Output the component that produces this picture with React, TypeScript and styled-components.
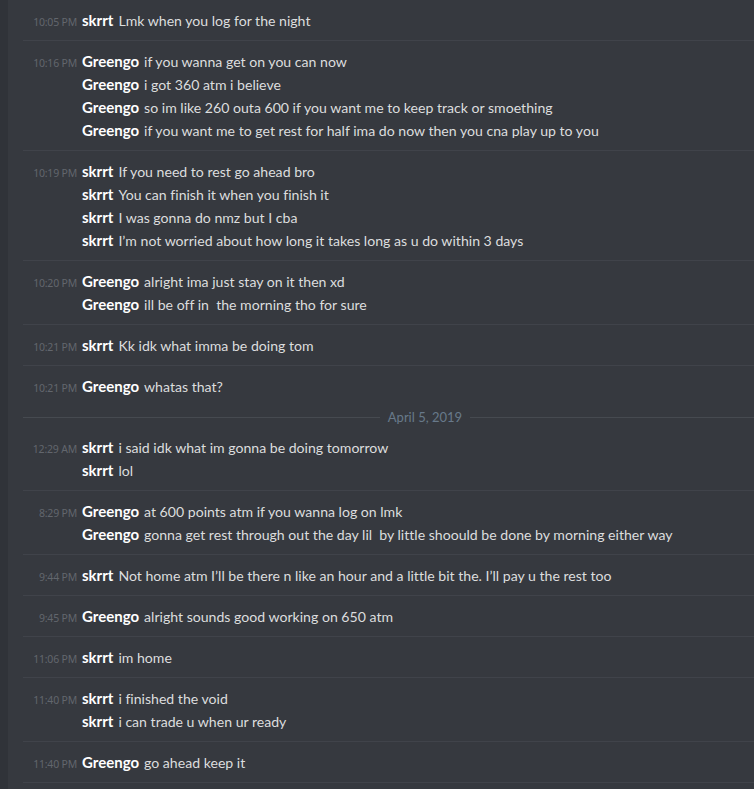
import React from "react";
import styled, { createGlobalStyle } from "styled-components";

type Group = {
  time: string;
  author: string;
  lines: string[];
};

const before: Group[] = [
  { time: "10:05 PM", author: "skrrt", lines: ["Lmk when you log for the night"] },
  {
    time: "10:16 PM",
    author: "Greengo",
    lines: [
      "if you wanna get on you can now",
      "i got 360 atm i believe",
      "so im like 260 outa 600 if you want me to keep track or smoething",
      "if you want me to get rest for half ima do now then you cna play up to you",
    ],
  },
  {
    time: "10:19 PM",
    author: "skrrt",
    lines: [
      "If you need to rest go ahead bro",
      "You can finish it when you finish it",
      "I was gonna do nmz but I cba",
      "I\u2019m not worried about how long it takes long as u do within 3 days",
    ],
  },
  {
    time: "10:20 PM",
    author: "Greengo",
    lines: ["alright ima just stay on it then xd", "ill be off in  the morning tho for sure"],
  },
  { time: "10:21 PM", author: "skrrt", lines: ["Kk idk what imma be doing tom"] },
  { time: "10:21 PM", author: "Greengo", lines: ["whatas that?"] },
];

const after: Group[] = [
  {
    time: "12:29 AM",
    author: "skrrt",
    lines: ["i said idk what im gonna be doing tomorrow", "lol"],
  },
  {
    time: "8:29 PM",
    author: "Greengo",
    lines: [
      "at 600 points atm if you wanna log on lmk",
      "gonna get rest through out the day lil  by little shoould be done by morning either way",
    ],
  },
  {
    time: "9:44 PM",
    author: "skrrt",
    lines: ["Not home atm I\u2019ll be there n like an hour and a little bit the. I\u2019ll pay u the rest too"],
  },
  { time: "9:45 PM", author: "Greengo", lines: ["alright sounds good working on 650 atm"] },
  { time: "11:06 PM", author: "skrrt", lines: ["im home"] },
  {
    time: "11:40 PM",
    author: "skrrt",
    lines: ["i finished the void", "i can trade u when ur ready"],
  },
  { time: "11:40 PM", author: "Greengo", lines: ["go ahead keep it"] },
];

const App = () => {
  const renderGroup = (g: Group, i: number, last: boolean) => (
    <SC.Group key={g.time + i} $divider={!last}>
      {g.lines.map((line, j) => (
        <SC.Line key={j}>
          <SC.Time>{j === 0 ? g.time : ""}</SC.Time>
          <SC.Content>
            <SC.Author>{g.author}</SC.Author>
            {line}
          </SC.Content>
        </SC.Line>
      ))}
    </SC.Group>
  );

  return (
    <>
      <GlobalStyle />
      <SC.Page>
        <SC.Gutter />
        <SC.Messages>
          {before.map((g, i) => renderGroup(g, i, i === before.length - 1))}
          <SC.DateDivider>
            <span>April 5, 2019</span>
          </SC.DateDivider>
          {after.map((g, i) => renderGroup(g, i, false))}
        </SC.Messages>
      </SC.Page>
    </>
  );
};

const GlobalStyle = createGlobalStyle`
  html, body {
    margin: 0;
    padding: 0;
    background: #36393f;
  }
  body {
    font-family: Lato, "Noto Sans", sans-serif;
    font-variant-ligatures: none;
    overflow: hidden;
  }
`;

const SC = {
  Page: styled.div`
    display: flex;
    width: 754px;
    height: 789px;
    background: #36393f;
    overflow: hidden;
  `,
  Gutter: styled.div`
    width: 8px;
    flex-shrink: 0;
    background: #303339;
  `,
  Messages: styled.div`
    flex: 1;
    display: flex;
    flex-direction: column;
    margin-left: 15px;
  `,
  Group: styled.div<{ $divider: boolean }>`
    padding: 9px 0 8px;
    border-bottom: 1px solid ${({ $divider }) => ($divider ? "#40434a" : "transparent")};
  `,
  Line: styled.div`
    display: flex;
    align-items: baseline;
    height: 23px;
    line-height: 23px;
  `,
  Time: styled.span`
    width: 54px;
    flex-shrink: 0;
    text-align: right;
    font-family: "Noto Sans", sans-serif;
    font-size: 10.5px;
    color: #62666d;
    margin-right: 5px;
    letter-spacing: -0.2px;
  `,
  Content: styled.span`
    font-size: 14.1px;
    color: #dcddde;
    white-space: pre;
  `,
  Author: styled.span`
    color: #ffffff;
    font-weight: 700;
    font-size: 15px;
    margin-right: 5px;
  `,
  DateDivider: styled.div`
    display: flex;
    align-items: center;
    height: 20px;
    gap: 8px;
    font-size: 13px;
    color: #68798a;
    &::before,
    &::after {
      content: "";
      height: 1px;
      background: #464a50;
    }
    &::before {
      flex: 357;
    }
    &::after {
      flex: 284;
    }
  `,
};

export default App;
